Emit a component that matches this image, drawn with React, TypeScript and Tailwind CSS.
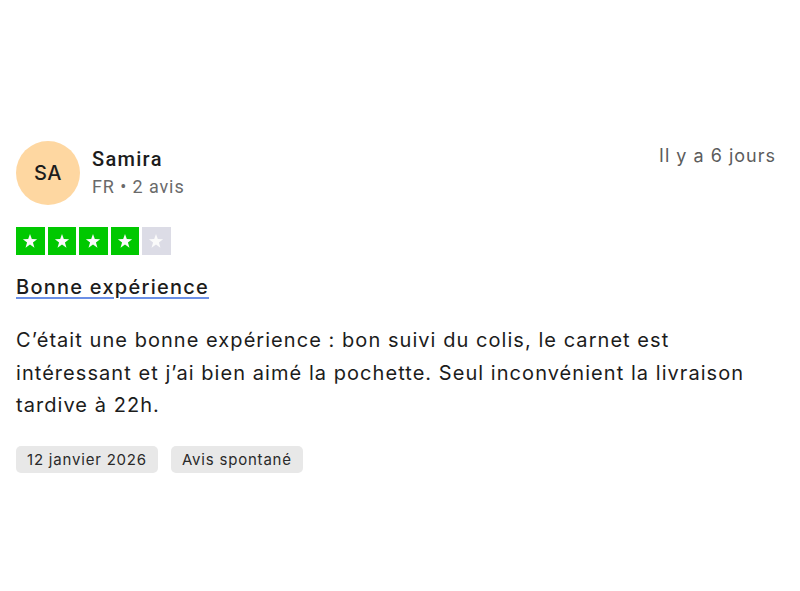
import React from 'react';

const Star = ({ on }: { on: boolean }) => (
  <div className={on ? 'flex h-[28px] w-[28.5px] items-center justify-center bg-[#00c800]' : 'flex h-[28px] w-[28.5px] items-center justify-center bg-[#dcdce6]'}>
    <svg viewBox="0 0 24 24" className="h-[16px] w-[16px]" fill="#fafafa">
      <path d="M12 1.5l2.7 7.6 8 .2-6.3 4.9 2.3 7.8L12 17.4l-6.7 4.6 2.3-7.8L1.3 9.3l8-.2z" />
    </svg>
  </div>
);

export default function App() {
  const rating = 4;
  return (
    <div className="min-h-[591px] w-[800px] bg-white font-['Inter','Liberation_Sans',sans-serif] text-[#1a1a1a]">
      <div className="pl-[16px] pr-[24px] pt-[141px]">
        <div className="flex items-start justify-between">
          <div className="flex items-center gap-[12px]">
            <div className="flex h-[64px] w-[64px] items-center justify-center rounded-full bg-[#fed7a1] text-[20px] font-medium tracking-[0.5px] text-[#1c1c1c]">
              SA
            </div>
            <div className="flex flex-col pb-[2px]">
              <span className="font-['Roboto',sans-serif] text-[20px] font-medium leading-[30px] tracking-[1.3px] text-[#1c1c1c]">Samira</span>
              <span className="font-['Roboto',sans-serif] text-[18px] leading-[26px] tracking-[0.9px] text-[#6a6a6a]">FR • 2 avis</span>
            </div>
          </div>
          <span className="mt-[2px] text-[18px] leading-[26px] tracking-[1px] text-[#5c5c5c]">Il y a 6 jours</span>
        </div>

        <div className="mt-[22px] flex gap-[3px]">
          {[0, 1, 2, 3, 4].map((i) => (
            <Star key={i} on={i < rating} />
          ))}
        </div>

        <div className="mt-[16px]">
          <a className="text-[20px] font-medium leading-[32px] tracking-[1.25px] text-[#1c1c1c] underline decoration-[#6b8fe6] decoration-[1.5px] underline-offset-[3px]">
            Bonne expérience
          </a>
        </div>

        <p className="mt-[21px] text-[20px] leading-[32.5px] tracking-[1.05px] text-[#1c1c1c]">
          C’était une bonne expérience : bon suivi du colis, le carnet est intéressant et j’ai bien aimé la pochette. Seul inconvénient la livraison tardive à 22h.
        </p>

        <div className="mt-[24px] flex gap-[13px]">
          <span className="rounded-[5px] bg-[#e8e8e8] px-[11px] text-[15px] leading-[27px] tracking-[0.8px] text-[#2a2a2a]">12 janvier 2026</span>
          <span className="rounded-[5px] bg-[#e8e8e8] px-[11px] text-[15px] leading-[27px] tracking-[0.8px] text-[#2a2a2a]">Avis spontané</span>
        </div>
      </div>
    </div>
  );
}
